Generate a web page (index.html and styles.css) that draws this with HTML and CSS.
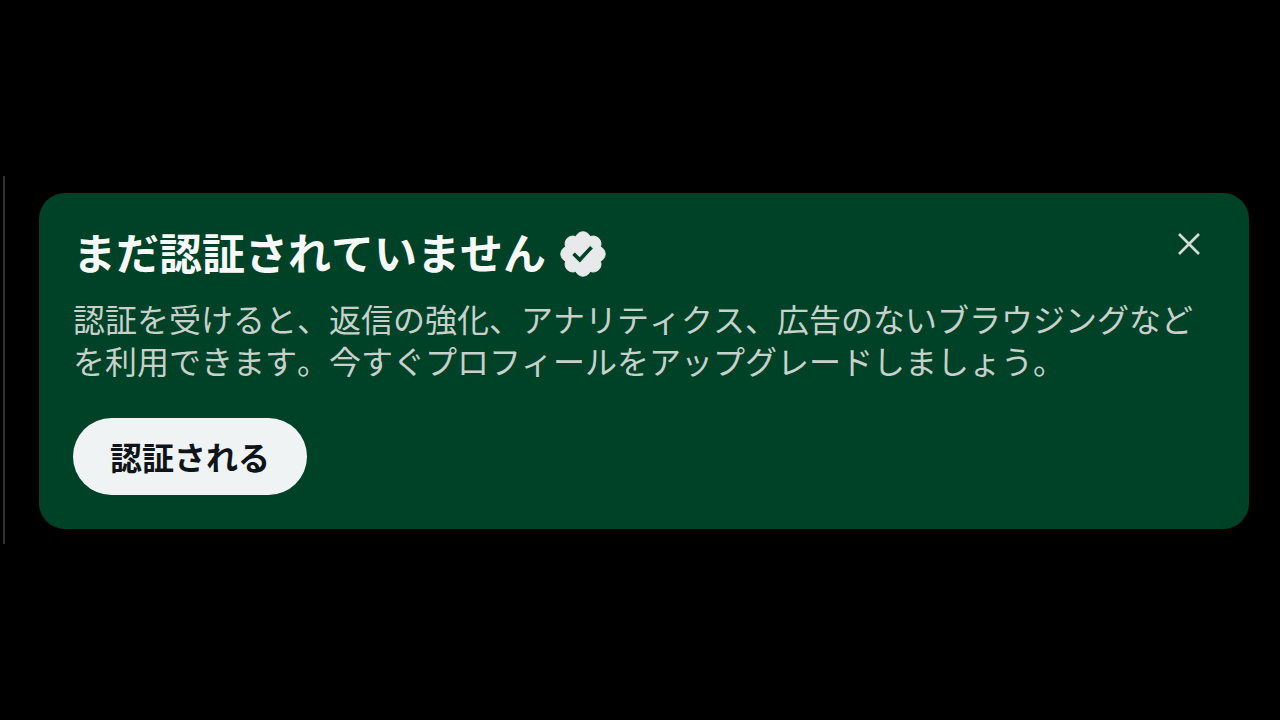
FILE: index.html
```html
<!DOCTYPE html>
<html lang="ja">
<head>
<meta charset="utf-8">
<meta name="viewport" content="width=device-width, initial-scale=1">
<title>まだ認証されていません</title>
<link rel="stylesheet" href="styles.css">
</head>
<body>
<main class="column">
  <section class="card" aria-labelledby="card-title">
    <header class="card-header">
      <h1 class="title" id="card-title">まだ認証されていません</h1>
      <svg class="badge" viewBox="0 0 22 22" aria-hidden="true">
        <path fill="currentColor" stroke="currentColor" stroke-width=".4" stroke-linejoin="round" d="M20.396 11c-.018-.646-.215-1.275-.57-1.816-.354-.54-.852-.972-1.438-1.246.223-.607.27-1.264.14-1.897-.131-.634-.437-1.218-.882-1.687-.47-.445-1.053-.75-1.687-.882-.633-.13-1.29-.083-1.897.14-.273-.587-.704-1.086-1.245-1.44S11.647 1.62 11 1.604c-.646.017-1.273.213-1.813.568s-.969.854-1.24 1.44c-.608-.223-1.267-.272-1.902-.14-.635.13-1.22.436-1.69.882-.445.47-.749 1.055-.878 1.688-.13.633-.08 1.29.144 1.896-.587.274-1.087.705-1.443 1.245-.356.54-.555 1.17-.574 1.817.02.647.218 1.276.574 1.817.356.54.856.972 1.443 1.245-.224.606-.274 1.263-.144 1.896.13.634.433 1.218.877 1.688.47.443 1.054.747 1.687.878.633.132 1.29.084 1.897-.136.274.586.705 1.084 1.246 1.439.54.354 1.17.551 1.816.569.647-.016 1.276-.213 1.817-.567s.972-.854 1.245-1.44c.604.239 1.266.296 1.903.164.636-.132 1.22-.447 1.68-.907.46-.46.776-1.044.908-1.681s.075-1.299-.165-1.903c.586-.274 1.084-.705 1.439-1.246.354-.54.551-1.17.569-1.816zM9.662 14.85l-3.429-3.428 1.293-1.302 2.072 2.072 4.4-4.794 1.347 1.246z"/>
      </svg>
      <button class="close" type="button" aria-label="閉じる">
        <svg class="close-icon" viewBox="0 0 24 24" aria-hidden="true">
          <path d="M2 2l20 20M22 2L2 22" fill="none" stroke="currentColor" stroke-width="2.6"/>
        </svg>
      </button>
    </header>
    <p class="description">認証を受けると、返信の強化、アナリティクス、広告のないブラウジングなどを利用できます。今すぐプロフィールをアップグレードしましょう。</p>
    <button class="action" type="button">認証される</button>
  </section>
</main>
</body>
</html>
```
FILE: styles.css
```css
* {
  box-sizing: border-box;
}

body {
  margin: 0;
  min-height: 100vh;
  display: flex;
  align-items: center;
  background: #000;
  font-family: "Noto Sans CJK JP", sans-serif;
  font-kerning: none;
}

.column {
  flex: 1;
  margin-left: 3px;
  padding: 17px 31px 15px 34px;
  border-left: 2px solid #2f3336;
}

.card {
  padding: 36px 48px 34px 34px;
  border-radius: 26px;
  background: #004228;
}

.card-header {
  display: flex;
  align-items: center;
  height: 50px;
  margin-bottom: 18px;
}

.title {
  align-self: flex-start;
  margin: 0;
  color: #f7f9f9;
  font-size: 43px;
  font-weight: 700;
  line-height: 44px;
}

.badge {
  width: 52px;
  height: 52px;
  margin-left: 11px;
  color: #e7e9ea;
}

.close {
  display: flex;
  align-self: flex-start;
  margin-left: auto;
  padding: 3px 0;
  border: 0;
  background: none;
  color: #d6dbd9;
  cursor: pointer;
}

.close-icon {
  width: 24px;
  height: 24px;
}

.description {
  margin: 0 0 37px;
  color: #c8d0cb;
  font-size: 32px;
  font-weight: 400;
  line-height: 42px;
}

.action {
  display: block;
  padding: 0 37px;
  border: 0;
  border-radius: 39px;
  background: #eff3f4;
  color: #0f1419;
  font: inherit;
  font-size: 32px;
  font-weight: 700;
  line-height: 77px;
  cursor: pointer;
}
```
